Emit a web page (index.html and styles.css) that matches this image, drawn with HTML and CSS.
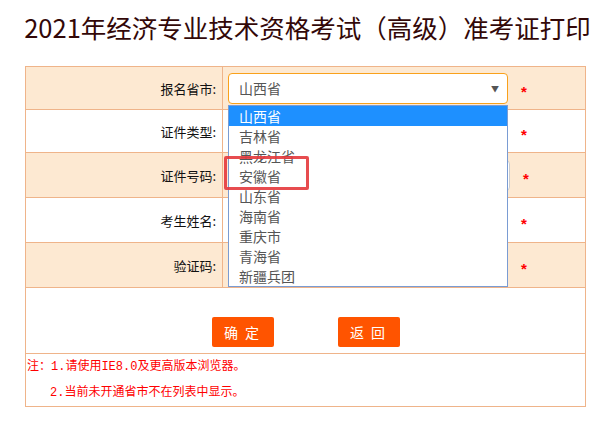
FILE: index.html
```html
<!DOCTYPE html>
<html lang="zh-CN">
<head>
    <meta charset="UTF-8">
    <title>准考证打印</title>
    <link rel="stylesheet" href="styles.css">
</head>
<body>
    <h1 class="title">2021年经济专业技术资格考试（高级）准考证打印</h1>
    <div class="page">
        <table class="form-table">
            <tr class="row-alt row-s">
                <td class="label">报名省市:</td>
                <td class="value">
                    <div class="select-wrap">
                        <div class="select">山西省<span class="arrow">&#9660;</span></div>
                        <span class="star">*</span>
                        <ul class="dropdown">
                            <li class="active">山西省</li>
                            <li>吉林省</li>
                            <li>黑龙江省</li>
                            <li>安徽省</li>
                            <li>山东省</li>
                            <li>海南省</li>
                            <li>重庆市</li>
                            <li>青海省</li>
                            <li>新疆兵团</li>
                        </ul>
                        <div class="mark"></div>
                    </div>
                </td>
            </tr>
            <tr class="row-s">
                <td class="label">证件类型:</td>
                <td class="value"><div class="field"></div><span class="star">*</span></td>
            </tr>
            <tr class="row-alt">
                <td class="label">证件号码:</td>
                <td class="value"><div class="field wide"></div><span class="star">*</span></td>
            </tr>
            <tr>
                <td class="label">考生姓名:</td>
                <td class="value"><div class="field"></div><span class="star">*</span></td>
            </tr>
            <tr class="row-alt">
                <td class="label">验证码:</td>
                <td class="value"><div class="field"></div><span class="star">*</span></td>
            </tr>
            <tr class="row-buttons">
                <td colspan="2">
                    <div class="buttons">
                        <button class="btn">确 定</button>
                        <button class="btn">返 回</button>
                    </div>
                </td>
            </tr>
            <tr class="row-notes">
                <td colspan="2">
                    <p>注：1.请使用IE8.0及更高版本浏览器。</p>
                    <p class="indent">2.当前未开通省市不在列表中显示。</p>
                </td>
            </tr>
        </table>
    </div>
</body>
</html>
```

FILE: styles.css
```css
body {
    margin: 0;
    background-color: #fff;
    font-family: "Noto Sans CJK SC", sans-serif;
}
.title {
    margin: 9px 0 0;
    font-size: 25.5px;
    line-height: 36px;
    font-weight: normal;
    color: #330808;
    text-align: center;
}
.page {
    padding: 21px 0 0 25px;
}
.form-table {
    width: 561px;
    border-collapse: collapse;
}
.form-table td {
    border: 1px solid #efb48a;
    padding: 0;
    height: 44px;
}
.form-table .row-s td {
    height: 42px;
}
.row-alt td {
    background-color: #fde9d2;
}
.label {
    width: 190px;
    padding-right: 6px !important;
    text-align: right;
    font-size: 13px;
    color: #111;
}
.value {
    padding-left: 5px !important;
    white-space: nowrap;
}
.select-wrap {
    position: relative;
    display: flex;
    align-items: center;
}
.select, .field {
    display: inline-block;
    vertical-align: middle;
    box-sizing: border-box;
    width: 280px;
    height: 31px;
    border: 1px solid #ccc;
    border-radius: 4px;
    background: #fff;
}
.field.wide {
    width: 282px;
}
.select {
    position: relative;
    border-color: #f9a11b;
    padding-left: 10px;
    font-size: 14px;
    line-height: 29px;
    color: #555;
}
.arrow {
    position: absolute;
    right: 8px;
    top: 0;
    font-size: 8px;
    color: #555;
}
.star {
    display: inline-block;
    vertical-align: middle;
    margin-left: 13px;
    margin-top: 6px;
    color: #f00;
    font-size: 15px;
    font-weight: bold;
    font-family: "Liberation Sans", sans-serif;
}
.dropdown {
    position: absolute;
    left: 0;
    top: 32px;
    z-index: 2;
    box-sizing: border-box;
    width: 280px;
    margin: 0;
    padding: 0;
    list-style: none;
    background: #fff;
    border: 1px solid #7a9cd3;
}
.dropdown li {
    height: 20px;
    padding-left: 10px;
    font-size: 14px;
    line-height: 20px;
    color: #555;
}
.dropdown li.active {
    background-color: #1e90ff;
    color: #fff;
}
.mark {
    position: absolute;
    z-index: 3;
    left: -4px;
    top: 83px;
    width: 79px;
    height: 28px;
    border: 3px solid rgba(228, 56, 60, 0.9);
    border-radius: 2px;
}
.form-table .row-buttons td {
    height: 65px;
    vertical-align: bottom;
}
.buttons {
    display: flex;
    justify-content: center;
    gap: 64px;
    padding-bottom: 6px;
}
.btn {
    width: 62px;
    height: 30px;
    border: none;
    border-radius: 2px;
    background-color: #ff5400;
    color: #fff;
    font-family: "Noto Sans CJK SC", sans-serif;
    font-size: 14px;
    letter-spacing: 2px;
}
.form-table .row-notes td {
    height: 52px;
    vertical-align: top;
    padding-left: 1px;
}
.row-notes p {
    margin: 0;
    font-family: "Liberation Mono", "Noto Sans CJK SC", monospace;
    font-size: 12px;
    line-height: 26px;
    color: #f00;
}
.row-notes .indent {
    padding-left: 23px;
}
```
